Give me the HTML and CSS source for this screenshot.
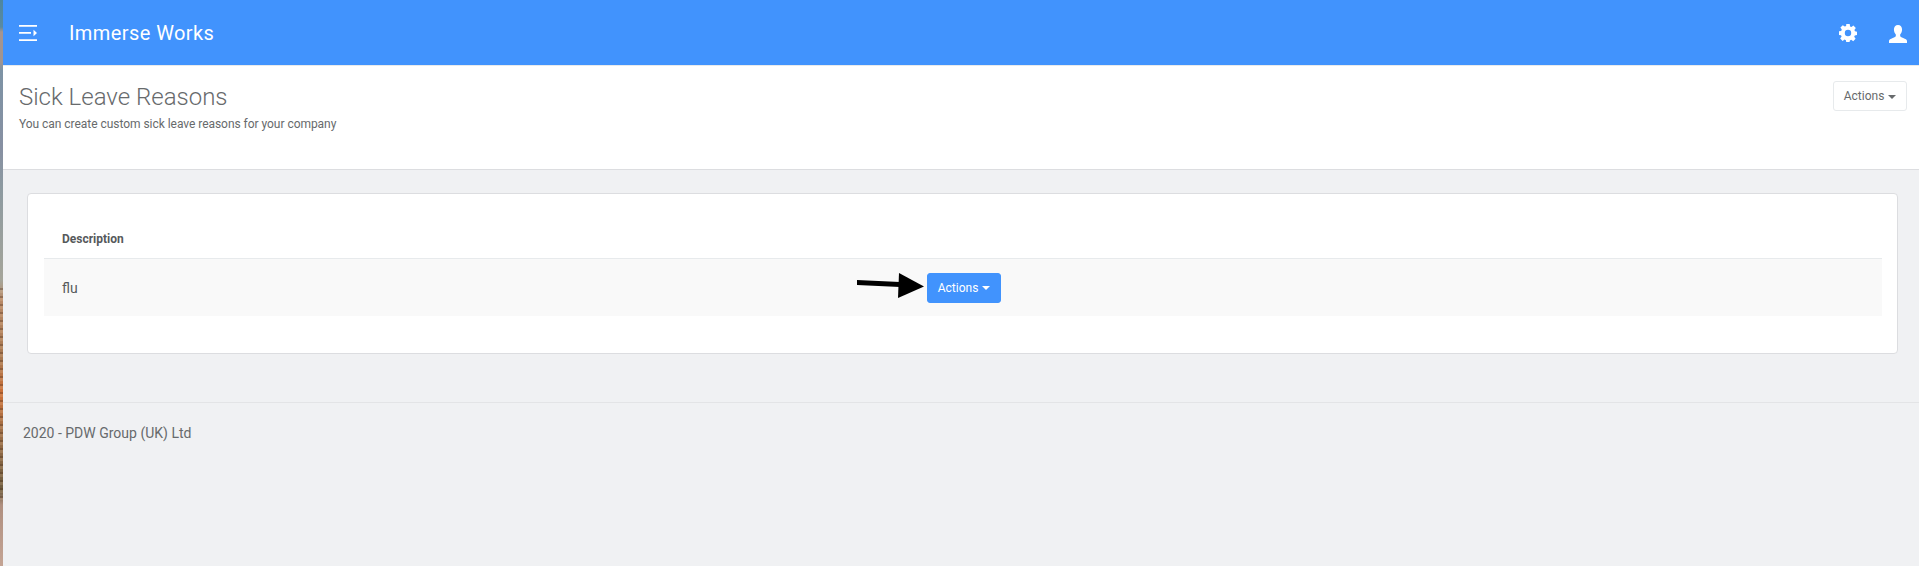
FILE: index.html
```html
<!DOCTYPE html>
<html lang="en">
<head>
<meta charset="utf-8">
<title>Sick Leave Reasons</title>
<link rel="stylesheet" href="styles.css">
</head>
<body>
<div class="wallpaper"></div>
<div class="app">
  <header class="topbar">
    <svg class="menu-icon" width="18" height="16" viewBox="0 0 18 16"><path d="M0 0h18v1.800H0zM0 7h12v1.800H0zM0 14.200h18V16H0z" fill="#fff"/><path d="M14.500 4.800l3.500 3.200-3.500 3.200z" fill="#fff"/></svg>
    <span class="brand">Immerse Works</span>
    <span class="spacer"></span>
    <svg class="gear" width="18" height="18" viewBox="0 0 18 18"><path fill="#fff" fill-rule="evenodd" d="M7.300 0h3.400l.4 2.400 1.300.6 2-1.400 2.400 2.400-1.400 2 .6 1.300 2 .4v3.400l-2.200.4-.6 1.300 1.400 2-2.400 2.400-2-1.400-1.300.6-.4 2H7.300l-.4-2.200-1.300-.6-2 1.400-2.400-2.400 1.400-2-.6-1.300-2-.4V7.300l2.200-.4.6-1.300-1.400-2 2.400-2.400 2 1.400 1.300-.6zM9 5.800a3.200 3.200 0 1 0 0 6.400 3.200 3.200 0 0 0 0-6.400z"/></svg>
    <svg class="user" width="18" height="18" viewBox="0 0 19 19"><path fill="#fff" d="M9.500 0c2.700 0 4.300 2 4.300 4.800 0 2.300-1 4.200-2 5.200v1.600c0 .8 1.300 1.400 3.200 2.200 2.400 1 3.900 1.700 4 3V19H0v-2.200c.1-1.300 1.600-2 4-3 1.900-.8 3.200-1.400 3.200-2.200V10c-1-1-2-2.900-2-5.200C5.200 2 6.800 0 9.500 0z"/></svg>
  </header>
  <section class="page-head">
    <div class="titles">
      <h1>Sick Leave Reasons</h1>
      <p>You can create custom sick leave reasons for your company</p>
    </div>
    <button class="btn btn-light">Actions <i class="caret"></i></button>
  </section>
  <main class="content">
    <div class="card">
      <table>
        <thead><tr><th>Description</th></tr></thead>
        <tbody>
          <tr><td class="row-cell">
            <span class="desc">flu</span>
            <span class="row-action">
              <svg class="arrow" width="67" height="26" viewBox="0 0 67 26"><path d="M0 7l43 2v5L0 12z" fill="#000"/><path d="M42 0l25 13.500L41 25z" fill="#000"/></svg>
              <button class="btn btn-primary">Actions <i class="caret"></i></button>
            </span>
          </td></tr>
        </tbody>
      </table>
    </div>
  </main>
  <footer class="foot">2020 - PDW Group (UK) Ltd</footer>
</div>
</body>
</html>
```
FILE: styles.css
```css
* { box-sizing: border-box; }
html, body { margin: 0; height: 100%; }
body {
  display: flex;
  height: 566px;
  overflow: hidden;
  background: #f0f1f3;
  font-family: Roboto, "Liberation Sans", sans-serif;
  color: #676a6c;
}
.wallpaper {
  flex: 0 0 3px;
  background:
    repeating-linear-gradient(180deg, rgba(70, 40, 20, 0) 0 3px, rgba(70, 40, 20, 0.3) 3px 5px, rgba(255, 220, 180, 0.15) 5px 8px) 0 285px / 100% 215px no-repeat,
    linear-gradient(180deg, #4d86a0 0, #5a8aa2 27px, #a59490 32px, #a09490 62px, #7d93a5 70px, #8790a2 150px, #8d9aa0 190px, #a5a59a 280px, #b88a68 300px, #a87850 360px, #cc7038 393px, #a07048 430px, #6d5c40 490px, #b09080 505px, #c4a494 566px);
}
.app { flex: 1; min-width: 0; display: flex; flex-direction: column; }
.topbar {
  height: 65px;
  flex: none;
  background: #4193fd;
  display: flex;
  align-items: center;
  padding: 0 12px 0 16px;
}
.menu-icon { flex: none; }
.brand { margin-left: 32px; color: #fff; font-size: 20px; letter-spacing: 0.42px; }
.spacer { flex: 1; }
.gear { margin-right: 32px; margin-top: 1px; }
.user { margin-top: 3px; }
.page-head {
  height: 105px;
  flex: none;
  background: #fff;
  border-top: 1px solid #e7eaec;
  border-bottom: 1px solid #dcdde0;
  display: flex;
  justify-content: space-between;
  align-items: flex-start;
  padding: 15px 12px 0 16px;
}
.titles h1 { margin: 3px 0 0; font-size: 24px; font-weight: 300; line-height: 27px; color: #676a6c; }
.titles p { margin: 5px 0 0; font-size: 12px; line-height: 16px; color: #676a6c; letter-spacing: -0.04px; }
.btn {
  font-family: inherit;
  font-size: 12px;
  border-radius: 3px;
  height: 30px;
  width: 74px;
  padding: 0;
  white-space: nowrap;
  cursor: pointer;
}
.btn-light { background: #fff; border: 1px solid #e7eaec; color: #676a6c; }
.btn-primary { background: #4193fd; border: 1px solid #4193fd; color: #fff; }
.caret {
  display: inline-block;
  width: 0;
  height: 0;
  margin-left: 1px;
  vertical-align: middle;
  border-top: 4px solid currentColor;
  border-left: 4px solid transparent;
  border-right: 4px solid transparent;
}
.content { flex: none; padding: 23px 21px 0 24px; height: 232px; }
.card {
  height: 161px;
  background: #fff;
  border: 1px solid #dcdde0;
  border-radius: 4px;
  padding: 0 15px 0 16px;
}
table { width: 100%; border-collapse: collapse; }
th {
  height: 64px;
  padding: 26px 18px 0;
  text-align: left;
  font-size: 12px;
  font-weight: 700;
  color: #56595b;
  border-bottom: 1px solid #e7eaec;
}
td { padding: 0; }
.row-cell {
  height: 58px;
  background: #f9f9f9;
  position: relative;
  padding-left: 18px;
}
.desc { font-size: 14px; color: #56595b; }
.row-action {
  position: absolute;
  left: 813px;
  top: 14px;
  display: flex;
  align-items: flex-start;
}
.arrow { margin-right: 3px; }
.foot {
  border-top: 1px solid #e3e4e6;
  padding: 20px 20px;
  font-size: 14px;
  line-height: 20px;
  color: #676a6c;
}
```
